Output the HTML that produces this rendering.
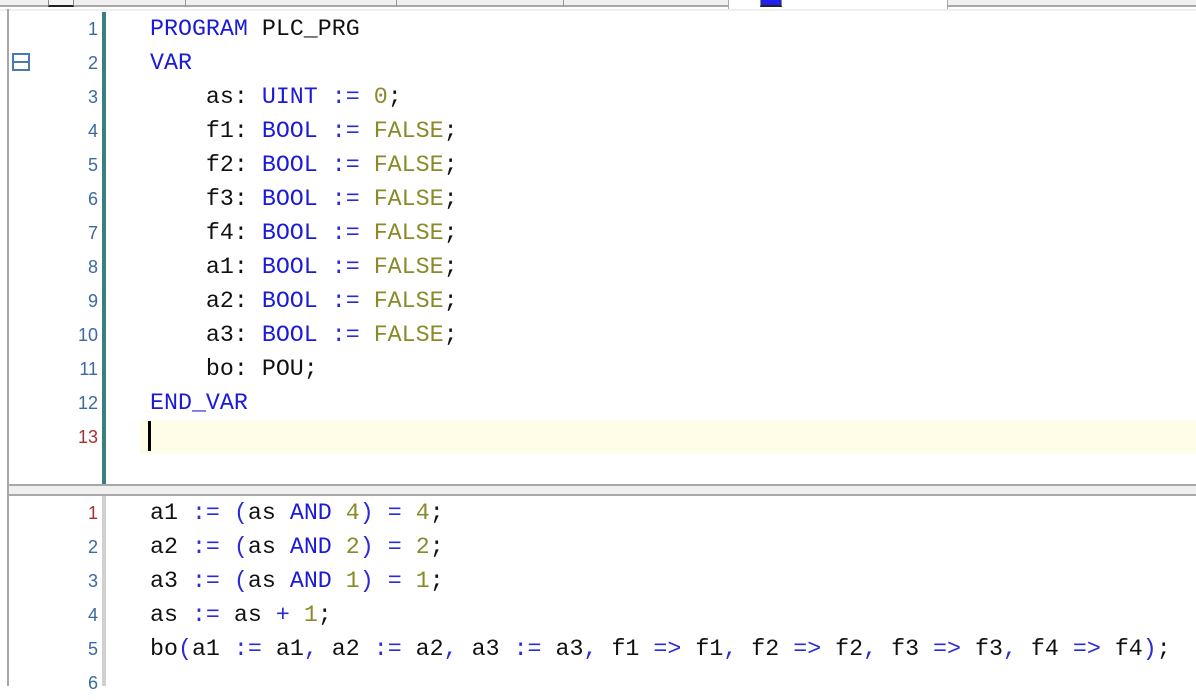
<!DOCTYPE html>
<html><head><meta charset="utf-8"><style>
*{margin:0;padding:0;box-sizing:border-box}
body{width:1196px;height:686px;background:#fff;position:relative;overflow:hidden;font-family:"Liberation Mono","Courier New",monospace}
.l{position:absolute;left:150px;font-size:23.3px;line-height:34px;height:34px;white-space:pre;color:#111}
.n{position:absolute;left:40px;width:58px;text-align:right;font-family:"Liberation Sans",sans-serif;font-size:18px;line-height:34px;color:#3a6aa0}
.k{color:#1a1ad8}.o{color:#2a2ad8}.v{color:#8a8a2a}
</style></head><body>
<div style="position:absolute;left:0;top:0;width:1196px;height:7px;background:#f0f0f0;border-bottom:2px solid #a8a8a8"></div>
<div style="position:absolute;left:0;top:9px;width:1196px;height:2px;background:#efefef"></div>
<div style="position:absolute;left:48px;top:0;width:26px;height:7px;border:1px solid #888;border-top:none;background:#f4f4f4;border-bottom:2px solid #222"></div>
<div style="position:absolute;left:185px;top:0;width:1px;height:7px;background:#999"></div>
<div style="position:absolute;left:396px;top:0;width:1px;height:7px;background:#999"></div>
<div style="position:absolute;left:563px;top:0;width:1px;height:7px;background:#999"></div>
<div style="position:absolute;left:728px;top:0;width:220px;height:9px;background:#fff;border-left:1px solid #aaa;border-right:1px solid #aaa"></div>
<div style="position:absolute;left:760px;top:0;width:22px;height:7px;border:1px solid #888;border-top:none;background:#2020ee;border-bottom:2px solid #222"></div>
<div style="position:absolute;left:7px;top:9px;width:2px;height:677px;background:#a8a8a8"></div>
<div style="position:absolute;left:102px;top:12px;width:4px;height:472px;background:#3a7f7f"></div>
<div style="position:absolute;left:140px;top:420px;width:1056px;height:34px;background:#fffde8"></div>
<div style="position:absolute;left:148px;top:421px;width:3px;height:30px;background:#000"></div>
<div style="position:absolute;left:12px;top:53px;width:18px;height:18px;border:2px solid #4a78b0"></div>
<div style="position:absolute;left:14px;top:61px;width:14px;height:2px;background:#4a78b0"></div>
<div style="position:absolute;left:9px;top:484px;width:1187px;height:12px;background:#efefef;border-top:2px solid #a8a8a8;border-bottom:2px solid #a8a8a8"></div>
<div style="position:absolute;left:102px;top:496px;width:4px;height:190px;background:#d0d0d0"></div>

<div class="n" style="top:12px">1</div>
<div class="n" style="top:46px">2</div>
<div class="n" style="top:80px">3</div>
<div class="n" style="top:114px">4</div>
<div class="n" style="top:148px">5</div>
<div class="n" style="top:182px">6</div>
<div class="n" style="top:216px">7</div>
<div class="n" style="top:250px">8</div>
<div class="n" style="top:284px">9</div>
<div class="n" style="top:318px">10</div>
<div class="n" style="top:352px">11</div>
<div class="n" style="top:386px">12</div>
<div class="n" style="top:420px;color:#a83030">13</div>

<div class="l" style="top:12px"><span class="k">PROGRAM</span> PLC_PRG</div>
<div class="l" style="top:46px"><span class="k">VAR</span></div>
<div class="l" style="top:80px">    as: <span class="k">UINT</span> <span class="o">:=</span> <span class="v">0</span>;</div>
<div class="l" style="top:114px">    f1: <span class="k">BOOL</span> <span class="o">:=</span> <span class="v">FALSE</span>;</div>
<div class="l" style="top:148px">    f2: <span class="k">BOOL</span> <span class="o">:=</span> <span class="v">FALSE</span>;</div>
<div class="l" style="top:182px">    f3: <span class="k">BOOL</span> <span class="o">:=</span> <span class="v">FALSE</span>;</div>
<div class="l" style="top:216px">    f4: <span class="k">BOOL</span> <span class="o">:=</span> <span class="v">FALSE</span>;</div>
<div class="l" style="top:250px">    a1: <span class="k">BOOL</span> <span class="o">:=</span> <span class="v">FALSE</span>;</div>
<div class="l" style="top:284px">    a2: <span class="k">BOOL</span> <span class="o">:=</span> <span class="v">FALSE</span>;</div>
<div class="l" style="top:318px">    a3: <span class="k">BOOL</span> <span class="o">:=</span> <span class="v">FALSE</span>;</div>
<div class="l" style="top:352px">    bo: POU;</div>
<div class="l" style="top:386px"><span class="k">END_VAR</span></div>

<div class="n" style="top:496px;color:#a83030">1</div>
<div class="n" style="top:530px">2</div>
<div class="n" style="top:564px">3</div>
<div class="n" style="top:598px">4</div>
<div class="n" style="top:632px">5</div>
<div class="n" style="top:666px">6</div>

<div class="l" style="top:496px">a1 <span class="o">:=</span> <span class="o">(</span>as <span class="k">AND</span> <span class="v">4</span><span class="o">)</span> <span class="o">=</span> <span class="v">4</span>;</div>
<div class="l" style="top:530px">a2 <span class="o">:=</span> <span class="o">(</span>as <span class="k">AND</span> <span class="v">2</span><span class="o">)</span> <span class="o">=</span> <span class="v">2</span>;</div>
<div class="l" style="top:564px">a3 <span class="o">:=</span> <span class="o">(</span>as <span class="k">AND</span> <span class="v">1</span><span class="o">)</span> <span class="o">=</span> <span class="v">1</span>;</div>
<div class="l" style="top:598px">as <span class="o">:=</span> as <span class="o">+</span> <span class="v">1</span>;</div>
<div class="l" style="top:632px">bo<span class="o">(</span>a1 <span class="o">:=</span> a1<span class="o">,</span> a2 <span class="o">:=</span> a2<span class="o">,</span> a3 <span class="o">:=</span> a3<span class="o">,</span> f1 <span class="o">=&gt;</span> f1<span class="o">,</span> f2 <span class="o">=&gt;</span> f2<span class="o">,</span> f3 <span class="o">=&gt;</span> f3<span class="o">,</span> f4 <span class="o">=&gt;</span> f4<span class="o">)</span>;</div>
</body></html>
